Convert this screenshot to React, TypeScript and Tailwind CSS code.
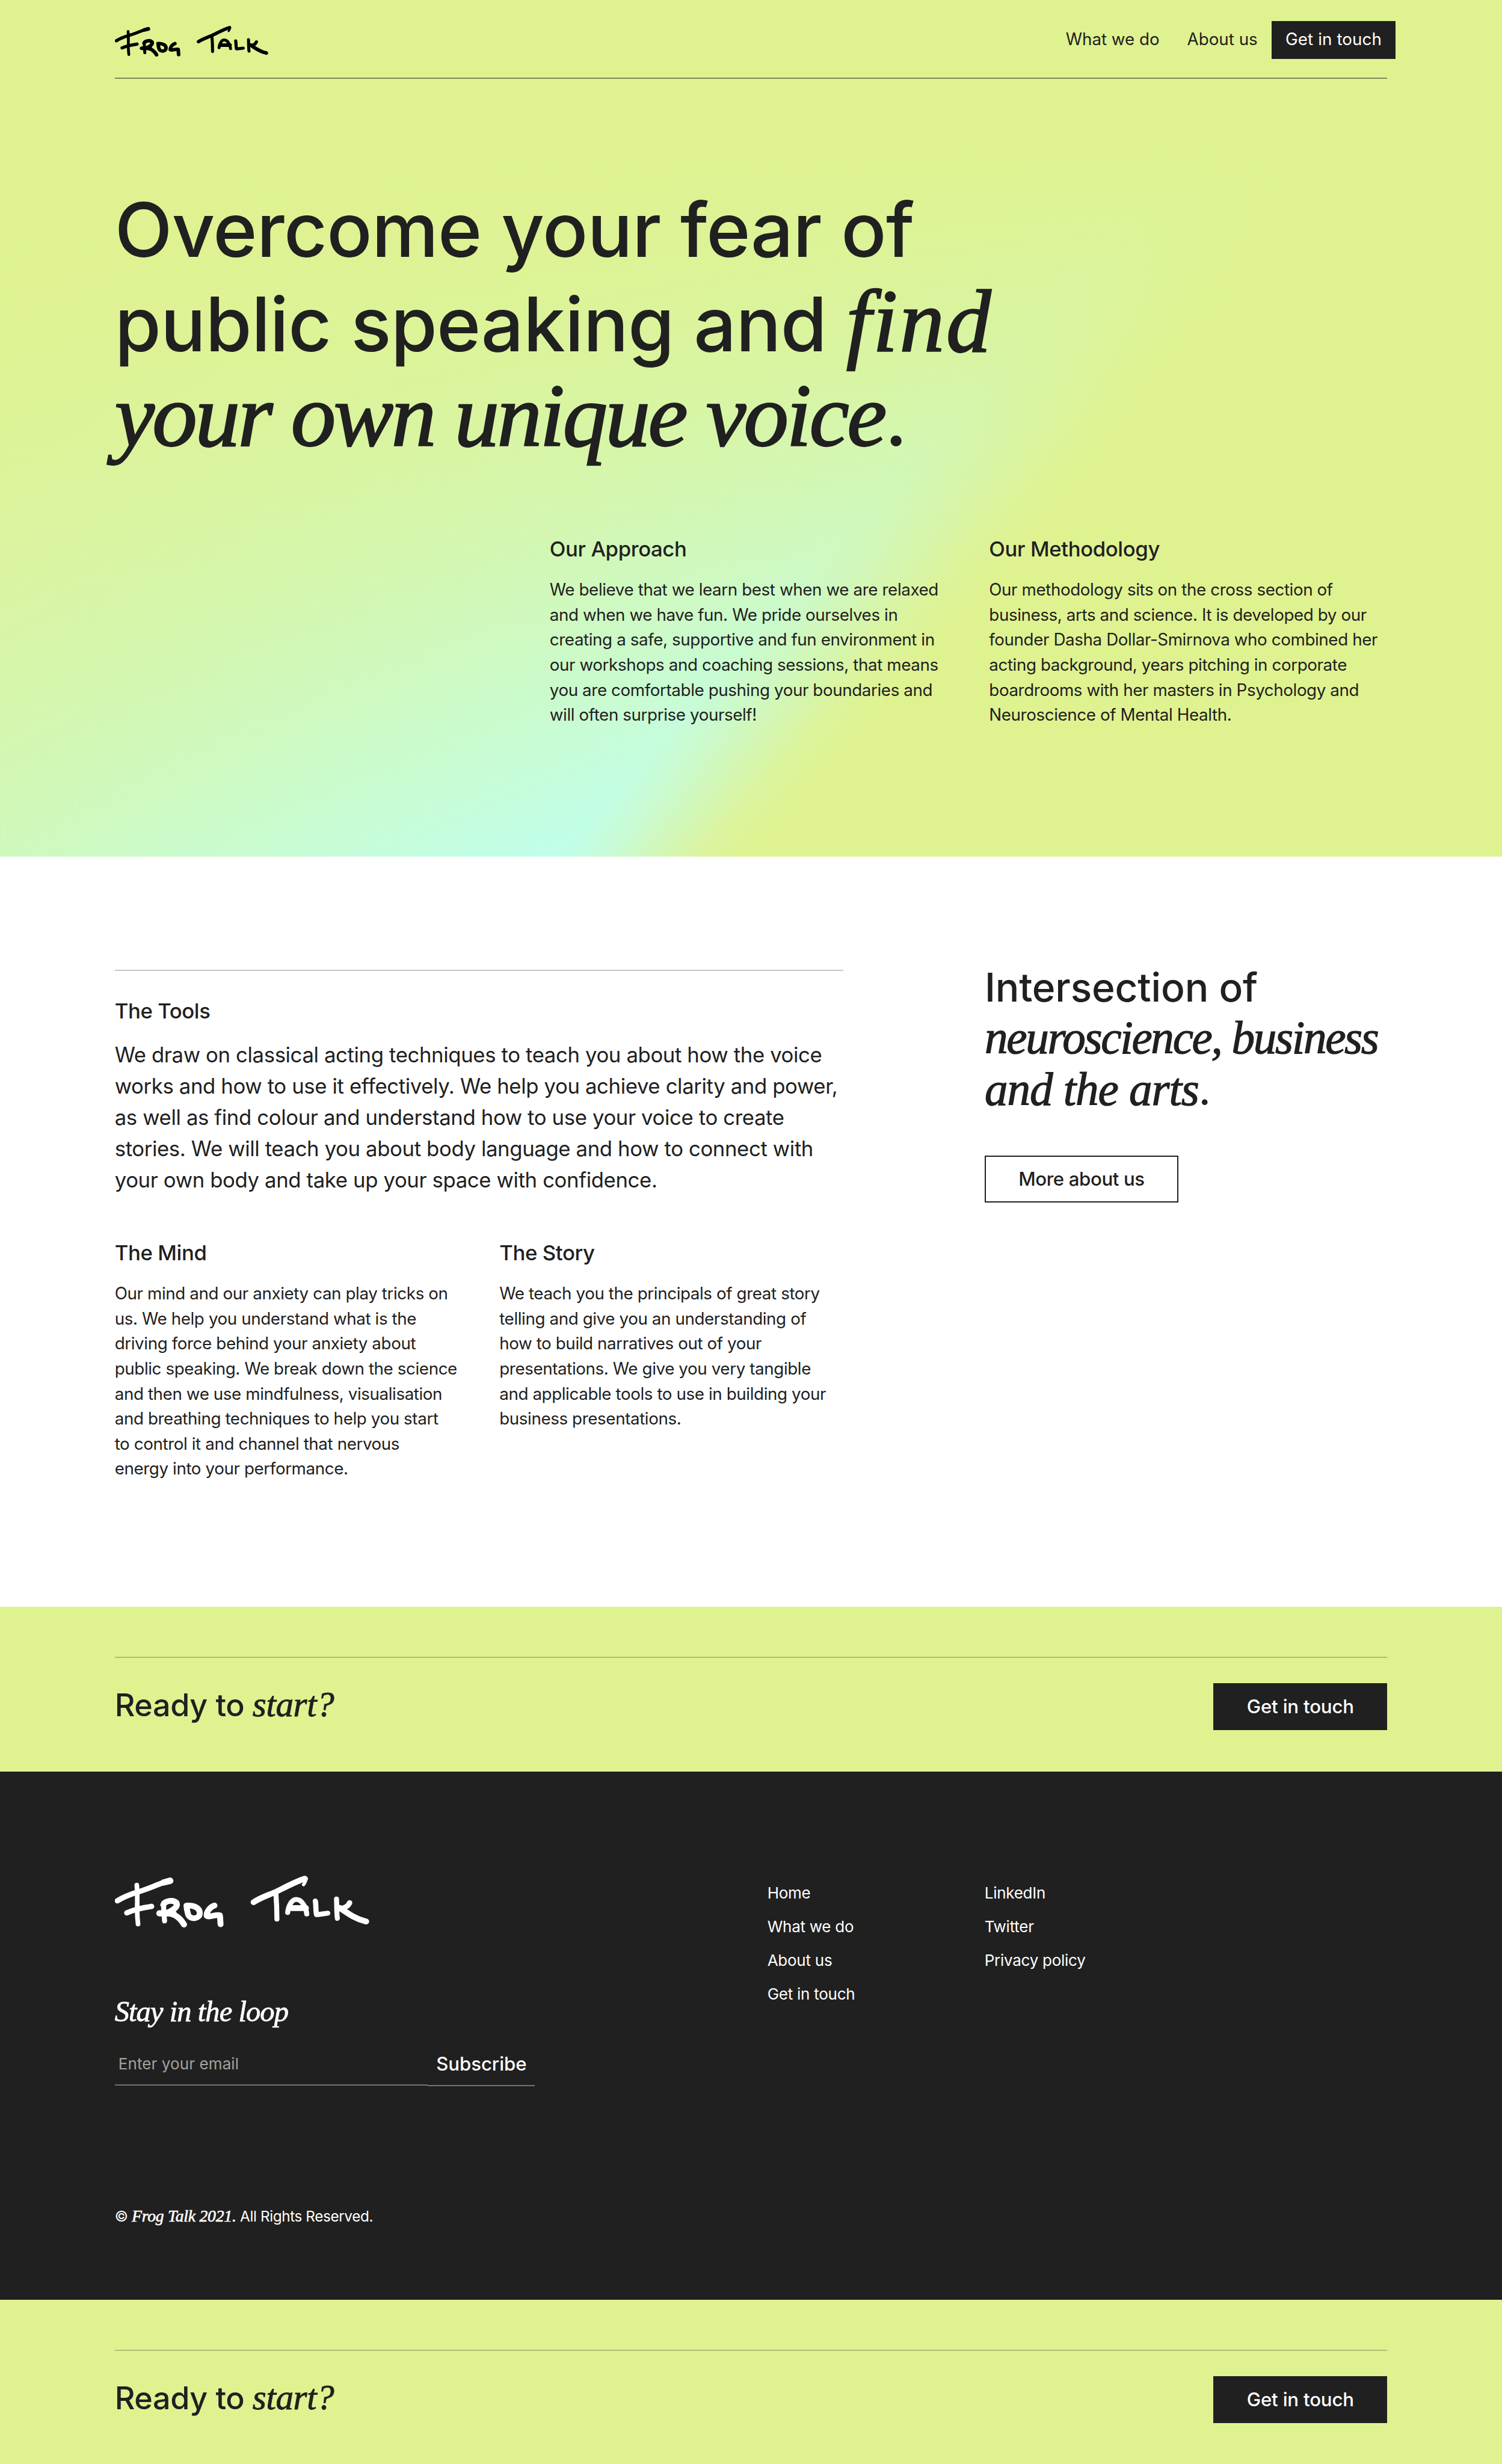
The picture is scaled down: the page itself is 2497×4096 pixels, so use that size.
import type { ReactNode } from "react";

/** Brush-lettered wordmark, drawn as round-capped strokes. */
function Logo({ className }: { className: string }) {
  return (
    <svg
      viewBox="58 80 1418 298"
      preserveAspectRatio="none"
      fill="none"
      stroke="currentColor"
      strokeLinecap="round"
      strokeLinejoin="round"
      className={className}
      role="img"
      aria-label="Frog Talk"
    >
      <path strokeWidth="26" d="M180 134C184 180 183 230 182 270C182 310 184 335 187 359" />
      <path strokeWidth="31" d="M72 225C110 200 150 185 195 171C250 154 310 124 366 106" />
      <path strokeWidth="36" d="M330 119L366 110" />
      <path strokeWidth="31" d="M125 294C165 275 215 264 262 257" />
      <path strokeWidth="28" d="M330 238C328 270 332 310 335 341" />
      <path strokeWidth="34" d="M328 248C338 222 385 218 401 236C412 262 375 284 345 295C395 298 426 330 443 361" />
      <path strokeWidth="35" d="M306 297L385 297" />
      <path strokeWidth="33" d="M457 252C490 250 531 260 531 296C530 332 476 335 466 303C461 285 458 272 457 252Z" />
      <path strokeWidth="33" d="M613 252C590 258 566 290 570 312C582 322 622 302 643 308C646 325 645 345 647 360" />
      <path strokeWidth="33" d="M831 233C870 205 920 190 960 171C1010 145 1070 112 1117 97" />
      <path strokeWidth="18" d="M1124 98C1122 112 1117 122 1109 132" />
      <path strokeWidth="28" d="M955 178C959 230 961 290 961 330" />
      <path strokeWidth="28" d="M1021 292C1024 258 1042 216 1070 217C1100 218 1124 262 1127 301" />
      <path strokeWidth="34" d="M1034 267L1122 267" />
      <path strokeWidth="29" d="M1175 226C1180 250 1176 285 1182 304C1200 304 1225 298 1244 296" />
      <path strokeWidth="28" d="M1293 214C1295 250 1293 295 1298 326" />
      <path strokeWidth="30" d="M1366 236C1358 256 1335 268 1312 270" />
      <path strokeWidth="34" d="M1312 266C1360 300 1400 330 1458 344" />
    </svg>
  );
}

function Serif({ className = "", children }: { className?: string; children: ReactNode }) {
  return <em className={`font-['Liberation_Serif',serif] font-normal leading-[0] italic ${className}`}>{children}</em>;
}

function Lines({ lines }: { lines: string[] }) {
  return (
    <>
      {lines.map((line) => (
        <span key={line} className="block whitespace-nowrap">
          {line}
        </span>
      ))}
    </>
  );
}

function TextBlock({ title, lines, className = "" }: { title: string; lines: string[]; className?: string }) {
  return (
    <article className={className}>
      <h3 className="text-[34.7px] leading-[42px] font-medium tracking-[-0.0108em]">{title}</h3>
      <p className="mt-[26.8px] text-[27.74px] leading-[41.6px] tracking-[-0.0138em]">
        <Lines lines={lines} />
      </p>
    </article>
  );
}

function CallToAction() {
  return (
    <section className="h-[274px] bg-[#dff290] px-[190.7px] pt-[83px]">
      <div className="flex items-start justify-between border-t-2 border-[#202020]/25 pt-[42px]">
        <h2 className="mt-[7px] text-[52px] leading-[60px] font-medium tracking-[-0.0067em] whitespace-nowrap">
          Ready to <Serif className="text-[59px] tracking-[-0.0065em] [-webkit-text-stroke:0.9px_#202020]">start?</Serif>
        </h2>
        <a className="flex h-[78px] w-[289px] items-center justify-center bg-[#202020] text-[31.2px] leading-[40px] font-medium tracking-[-0.0058em] text-white">
          Get in touch
        </a>
      </div>
    </section>
  );
}

function FooterLinks({ links, className }: { links: string[]; className: string }) {
  return (
    <ul className={`text-[26px] leading-[56.1px] tracking-[-0.01em] whitespace-nowrap ${className}`}>
      {links.map((link) => (
        <li key={link}>{link}</li>
      ))}
    </ul>
  );
}

export default function App() {
  return (
    <div className="h-[4096px] w-[2497px] overflow-hidden bg-[#dff290] font-['Inter',sans-serif] text-[#202020]">
      <section className="h-[1424px] bg-[linear-gradient(180deg,#dff290_0px,#dff290_230px,rgba(223,242,144,0.78)_593px,rgba(223,242,144,0.5)_867px,rgba(223,242,144,0.3)_1073px,rgba(223,242,144,0)_1424px),linear-gradient(132deg,#dff290_0px,#d8f5ab_580px,#cff9bd_953px,#c0ffeb_1640px,#c8fbd6_1700px,#dbf49f_1815px,#dff290_1880px)]">
        <div className="px-[190.7px]">
          <header className="flex h-[131px] items-start justify-between border-b-2 border-[#202020]/50">
            <Logo className="mt-[43.4px] h-[51px] w-[255px] text-black" />
            <nav className="mt-[35px] mr-[-14px] flex h-[63px] text-[27.74px] leading-[61px] whitespace-nowrap">
              <a className="px-[23px]">What we do</a>
              <a className="px-[23px]">About us</a>
              <a className="bg-[#202020] px-[23.3px] tracking-[0.004em] text-white">Get in touch</a>
            </nav>
          </header>
          <h1 className="mt-[172.3px] text-[124.85px] leading-[157px] font-medium tracking-[-0.006em] whitespace-nowrap">
            Overcome your fear of
            <br />
            public speaking and{" "}
            <Serif className="text-[149px] tracking-[0.02em] [-webkit-text-stroke:2.4px_#202020]">find</Serif>
            <br />
            <Serif className="text-[149px] tracking-[-0.0233em] [-webkit-text-stroke:2.4px_#202020]">
              your own unique voice
            </Serif>
            .
          </h1>
          <div className="mt-[117.2px] ml-[723.1px] flex">
            <TextBlock
              className="w-[730.5px]"
              title="Our Approach"
              lines={[
                "We believe that we learn best when we are relaxed",
                "and when we have fun. We pride ourselves in",
                "creating a safe, supportive and fun environment in",
                "our workshops and coaching sessions, that means",
                "you are comfortable pushing your boundaries and",
                "will often surprise yourself!",
              ]}
            />
            <TextBlock
              title="Our Methodology"
              lines={[
                "Our methodology sits on the cross section of",
                "business, arts and science. It is developed by our",
                "founder Dasha Dollar-Smirnova who combined her",
                "acting background, years pitching in corporate",
                "boardrooms with her masters in Psychology and",
                "Neuroscience of Mental Health.",
              ]}
            />
          </div>
        </div>
      </section>

      <section className="flex h-[1247px] items-start bg-white px-[190.7px]">
        <div className="mt-[188px] w-[1211.3px] border-t-2 border-[#202020]/25 pt-[45px]">
          <h3 className="text-[34.7px] leading-[42px] font-medium tracking-[-0.0116em]">The Tools</h3>
          <p className="mt-[27.4px] text-[34.68px] leading-[51.8px] tracking-[-0.0102em]">
            <Lines
              lines={[
                "We draw on classical acting techniques to teach you about how the voice",
                "works and how to use it effectively. We help you achieve clarity and power,",
                "as well as find colour and understand how to use your voice to create",
                "stories. We will teach you about body language and how to connect with",
                "your own body and take up your space with confidence.",
              ]}
            />
          </p>
          <div className="mt-[74px] flex">
            <TextBlock
              className="w-[639.5px]"
              title="The Mind"
              lines={[
                "Our mind and our anxiety can play tricks on",
                "us. We help you understand what is the",
                "driving force behind your anxiety about",
                "public speaking. We break down the science",
                "and then we use mindfulness, visualisation",
                "and breathing techniques to help you start",
                "to control it and channel that nervous",
                "energy into your performance.",
              ]}
            />
            <TextBlock
              title="The Story"
              lines={[
                "We teach you the principals of great story",
                "telling and give you an understanding of",
                "how to build narratives out of your",
                "presentations. We give you very tangible",
                "and applicable tools to use in building your",
                "business presentations.",
              ]}
            />
          </div>
        </div>
        <div className="mt-[173.6px] ml-[235px]">
          <h2 className="text-[65.9px] leading-[86.3px] font-medium tracking-[-0.0027em] whitespace-nowrap">
            Intersection of
            <br />
            <Serif className="text-[77.2px] tracking-[-0.03em] [-webkit-text-stroke:1.2px_#202020]">
              neuroscience, business
            </Serif>
            <br />
            <Serif className="text-[77.2px] tracking-[-0.014em] [-webkit-text-stroke:1.2px_#202020]">and the arts</Serif>.
          </h2>
          <a className="mt-[64.3px] flex h-[78px] w-[322px] items-center justify-center border-2 border-[#202020] text-[31.2px] leading-[40px] font-medium tracking-[-0.012em]">
            More about us
          </a>
        </div>
      </section>

      <CallToAction />

      <footer className="flex h-[878px] items-start bg-[#202020] px-[190.7px] text-white">
        <div className="w-[1085px] pt-[173.3px]">
          <Logo className="h-[86px] w-[423px]" />
          <p className="mt-[110px] h-[60px] font-['Liberation_Serif',serif] text-[48.5px] leading-[60px] tracking-[-0.019em] italic [-webkit-text-stroke:0.8px_#ffffff]">
            Stay in the loop
          </p>
          <form className="mt-[36.5px] flex items-start">
            <div className="h-[56px] w-[520.5px] border-b-2 border-[#73746c] pl-[6px] text-[26px] leading-[40px] tracking-[0.004em] text-[#a3a399]">
              Enter your email
            </div>
            <button
              type="button"
              className="h-[57px] w-[178px] border-b-2 border-[#73746c] pl-[14px] text-left text-[31.2px] leading-[40px] font-medium tracking-[-0.002em]"
            >
              <span className="block h-[55px]">Subscribe</span>
            </button>
          </form>
          <p className="mt-[200px] text-[24.3px] leading-[32px] tracking-[-0.016em] whitespace-nowrap">
            ©{" "}
            <Serif className="text-[27.7px] tracking-[-0.0084em] [-webkit-text-stroke:0.6px_#ffffff]">Frog Talk 2021.</Serif>{" "}
            All Rights Reserved.
          </p>
        </div>
        <FooterLinks className="mt-[174px] w-[361px]" links={["Home", "What we do", "About us", "Get in touch"]} />
        <FooterLinks className="mt-[174px]" links={["LinkedIn", "Twitter", "Privacy policy"]} />
      </footer>

      <CallToAction />
    </div>
  );
}
